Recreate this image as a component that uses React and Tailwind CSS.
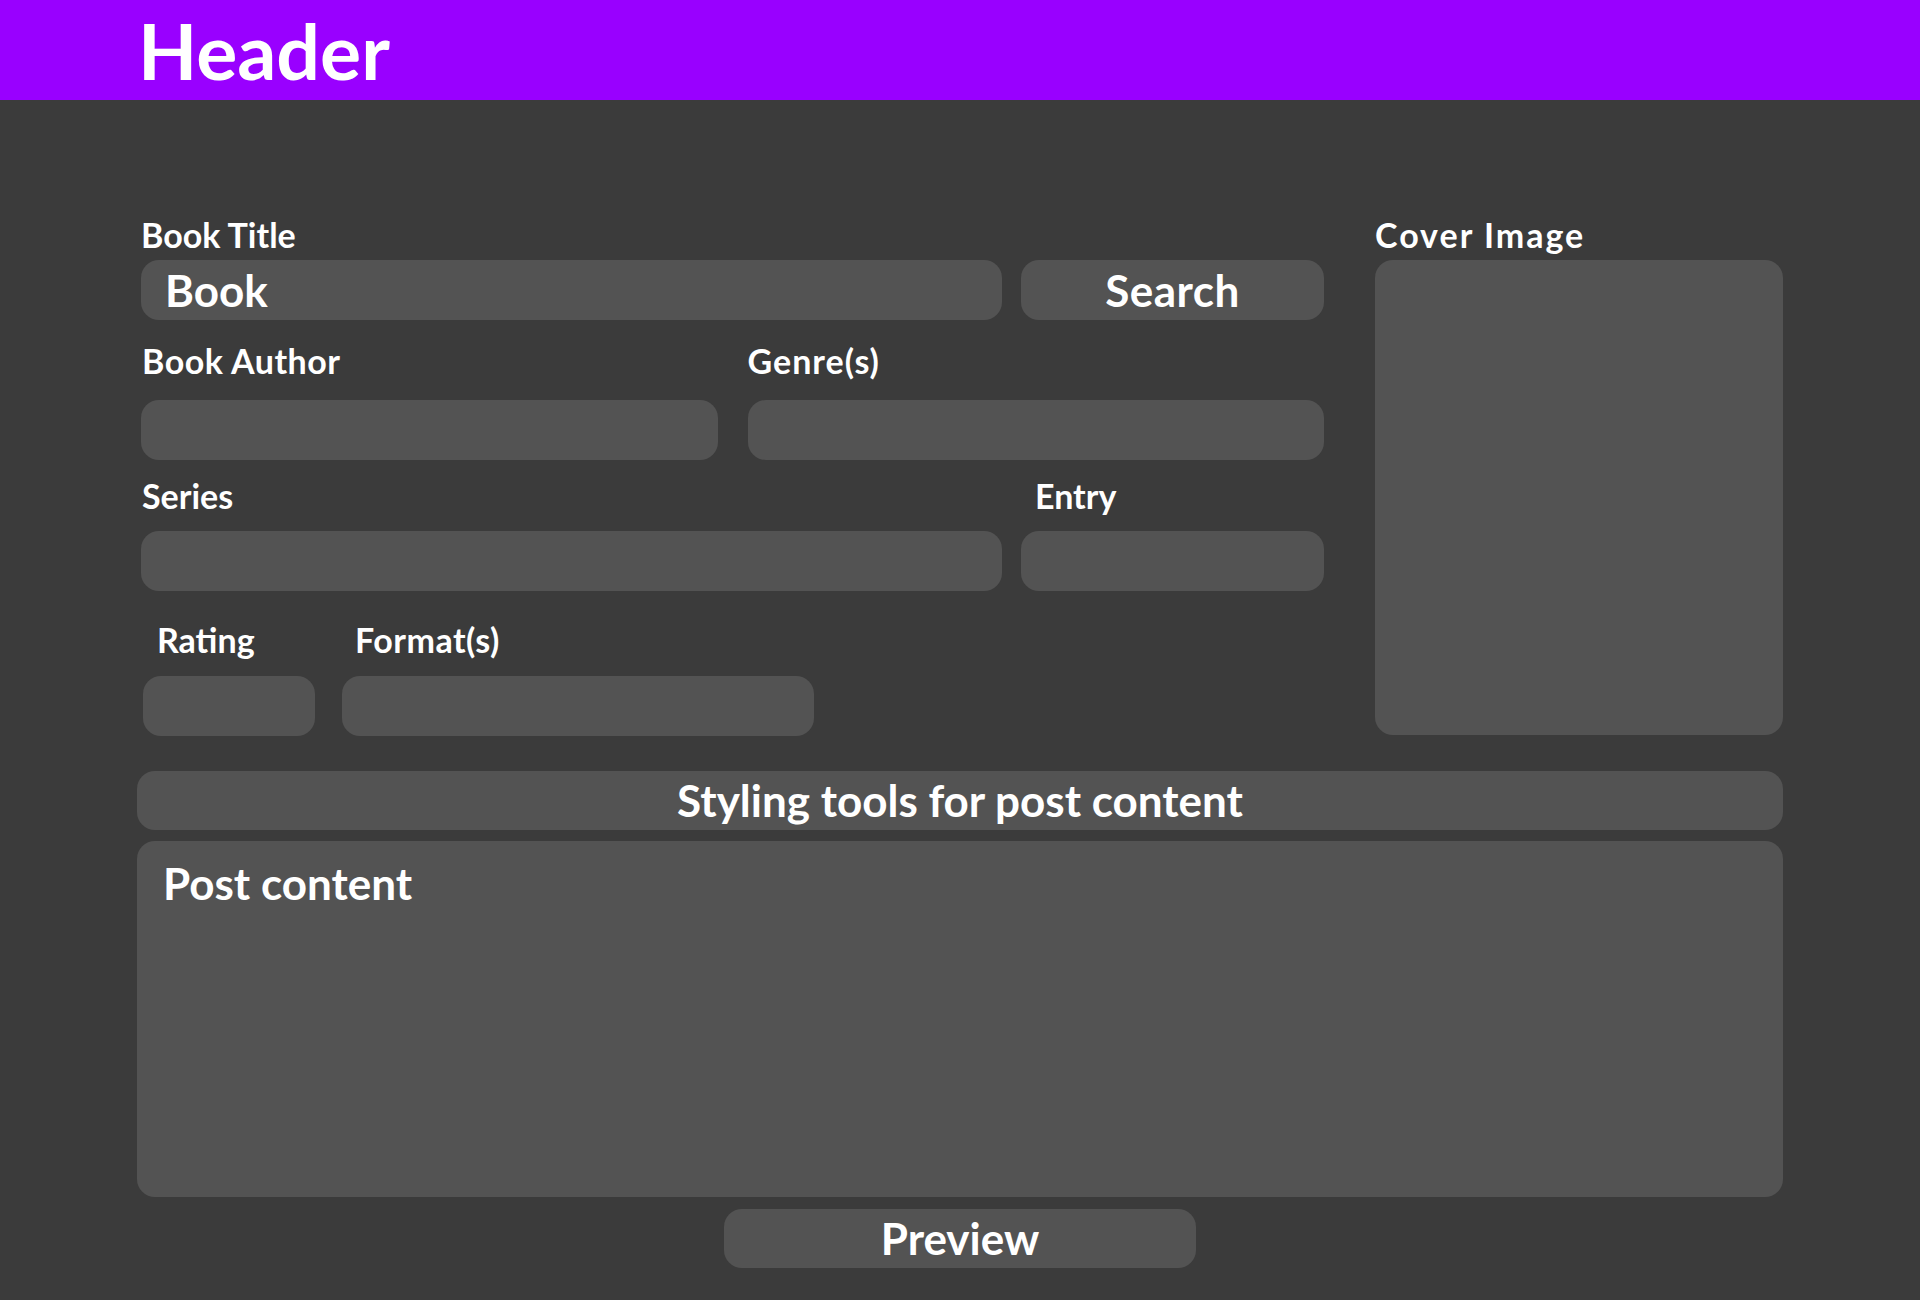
import React from 'react';

const FONT = { fontFamily: 'Lato, "Noto Sans", sans-serif' };

function Label({ children, className = '' }) {
  return (
    <div className={`h-[40px] text-[34px] font-bold leading-[40px] text-white ${className}`}>
      {children}
    </div>
  );
}

function Field({ className = '', children }) {
  return (
    <div className={`h-[60px] rounded-[18px] bg-[#535353] text-[44px] font-bold leading-[60px] text-white ${className}`}>
      {children}
    </div>
  );
}

export default function App() {
  return (
    <div className="min-h-screen bg-[#3b3b3b]" style={FONT}>
      <header className="h-[100px] bg-[#9900ff]">
        <h1 className="pl-[138px] text-[77px] font-bold leading-[100px] text-white">Header</h1>
      </header>

      <main className="mx-auto w-[1646px] pt-[115px] pb-[34px]">
        <div className="flex gap-[51px]">
          {/* form fields */}
          <div className="w-[1187px] pl-1">
            <Label>Book Title</Label>
            <div className="mt-[5px] flex gap-[19px]">
              <Field className="w-[861px] pl-[24px]">Book</Field>
              <Field className="w-[303px] text-center tracking-[0.5px]">Search</Field>
            </div>

            <div className="mt-[21px] grid grid-cols-2 gap-x-[30px]">
              <Label className="pl-[1px] tracking-[0.5px]">Book Author</Label>
              <Label className="tracking-[1px]">Genre(s)</Label>
              <Field className="mt-[19px]" />
              <Field className="mt-[19px]" />
            </div>

            <div className="mt-[16px] flex gap-[19px]">
              <div className="w-[861px]">
                <Label className="pl-[1px]">Series</Label>
                <Field className="mt-[15px]" />
              </div>
              <div className="w-[303px]">
                <Label className="pl-[14px]">Entry</Label>
                <Field className="mt-[15px]" />
              </div>
            </div>

            <div className="mt-[29px] flex gap-[27px] pl-[2px]">
              <div className="w-[172px]">
                <Label className="pl-[14px]">Rating</Label>
                <Field className="mt-[16px]" />
              </div>
              <div className="w-[472px]">
                <Label className="pl-[13px] tracking-[0.5px]">Format(s)</Label>
                <Field className="mt-[16px]" />
              </div>
            </div>
          </div>

          {/* cover */}
          <div className="w-[408px]">
            <Label className="tracking-[2px]">Cover Image</Label>
            <div className="mt-[5px] h-[475px] rounded-[18px] bg-[#535353]" />
          </div>
        </div>

        <div className="mt-[35px] h-[59px] rounded-[18px] bg-[#535353] text-center text-[44px] font-bold leading-[59px] text-white">
          Styling tools for post content
        </div>

        <div className="mt-[11px] h-[356px] rounded-[18px] bg-[#535353] px-[26px] pt-[14px] text-[44px] font-bold leading-[56px] text-white">
          Post content
        </div>

        <div className="mx-auto mt-[12px] h-[59px] w-[472px] rounded-[18px] bg-[#535353] text-center text-[44px] font-bold leading-[59px] text-white">
          Preview
        </div>
      </main>
    </div>
  );
}
